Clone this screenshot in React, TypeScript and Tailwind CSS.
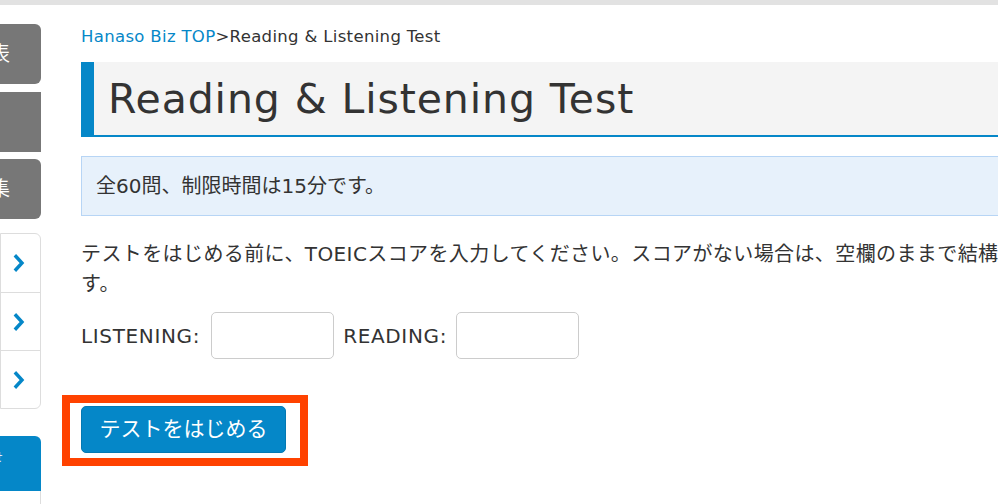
import React from 'react';

const Chevron = () => (
  <svg width="13" height="18" viewBox="0 0 13 18" aria-hidden="true">
    <path d="M3 2.5l6 6.5-6 6.5" fill="none" stroke="#0587c8" strokeWidth="3.4" strokeLinecap="square" strokeLinejoin="miter" />
  </svg>
);

const GrayItem = ({ label, className = '' }: { label: string; className?: string }) => (
  <div className={`h-[60px] bg-[#777777] rounded-r-[6px] flex items-center justify-end pr-[31px] text-white text-[20px] whitespace-nowrap overflow-hidden ${className}`}>
    {label}
  </div>
);

const App: React.FC = () => {
  return (
    <div className="w-[998px] h-[504px] overflow-hidden bg-white text-[#333333] font-['DejaVu_Sans','Noto_Sans_CJK_JP',sans-serif]">
      {/* top strip */}
      <div className="h-[5px] bg-[#e2e2e2]"></div>

      <div className="flex">
        {/* Side menu (cut off at the left edge) */}
        <aside className="w-[41px] shrink-0 overflow-hidden pt-[19px]">
          <GrayItem label="予約表" />
          <GrayItem label="マイページ" className="mt-[8px] pr-[60px]" />
          <GrayItem label="教材集" className="mt-[7px]" />

          <div className="mt-[14px] bg-white border border-[#dddddd] rounded-r-[6px]">
            {[0, 1, 2].map((i) => (
              <div key={i} className={`h-[58px] flex items-center pl-[12px] ${i > 0 ? 'border-t border-[#dddddd]' : ''}`}>
                <Chevron />
              </div>
            ))}
          </div>

          <div className="mt-[27px] h-[55px] bg-[#0587c8] rounded-tr-[6px] flex items-start justify-end pt-[13px] pr-[38px] text-white text-[12px] whitespace-nowrap overflow-hidden">
            お問い合わせ
          </div>
          <div className="h-[40px] border-r border-[#dddddd]"></div>
        </aside>

        {/* Main content */}
        <main className="ml-[40px] w-[950px] shrink-0 pt-[20px]">
          <div className="text-[16.5px] leading-[24px] tracking-[0.33px] whitespace-nowrap">
            <a href="#" className="text-[#0587c8]">Hanaso Biz TOP</a>
            <span>&gt;Reading &amp; Listening Test</span>
          </div>

          <h1 className="mt-[13px] h-[75px] bg-[#f4f4f4] border-l-[13px] border-b-2 border-[#0587c8] pl-[14px] pt-[3px] flex items-center text-[41px] tracking-[0.9px] font-normal whitespace-nowrap">
            Reading &amp; Listening Test
          </h1>

          <div className="mt-[19px] bg-[#e7f1fb] border border-[#b7d5f5] py-[14px] pl-[14px] text-[20px] leading-[30px]">
            全60問、制限時間は15分です。
          </div>

          <p className="mt-[23px] text-[20px] leading-[30px] tracking-[0.4px]">
            テストをはじめる前に、TOEICスコアを入力してください。スコアがない場合は、空欄のままで結構です。
          </p>

          <div className="mt-[13px] flex items-center h-[47px] text-[20px] tracking-[0.65px]">
            <label>LISTENING:</label>
            <input type="text" className="ml-[11px] w-[123px] h-[47px] border border-[#cccccc] rounded-[5px] bg-white outline-none" />
            <label className="ml-[9px]">READING:</label>
            <input type="text" className="ml-[9px] w-[123px] h-[47px] border border-[#cccccc] rounded-[5px] bg-white outline-none" />
          </div>

          <div className="mt-[47px] relative inline-block">
            <button className="w-[205px] h-[47px] bg-[#0587c8] text-white text-[21px] rounded-[5px] border border-[#0479b3]">
              テストをはじめる
            </button>
            {/* highlight frame */}
            <div className="absolute left-[-19px] top-[-11px] w-[246px] h-[71px] border-[8px] border-[#ff4200] pointer-events-none"></div>
          </div>
        </main>
      </div>
    </div>
  );
};

export default App;
